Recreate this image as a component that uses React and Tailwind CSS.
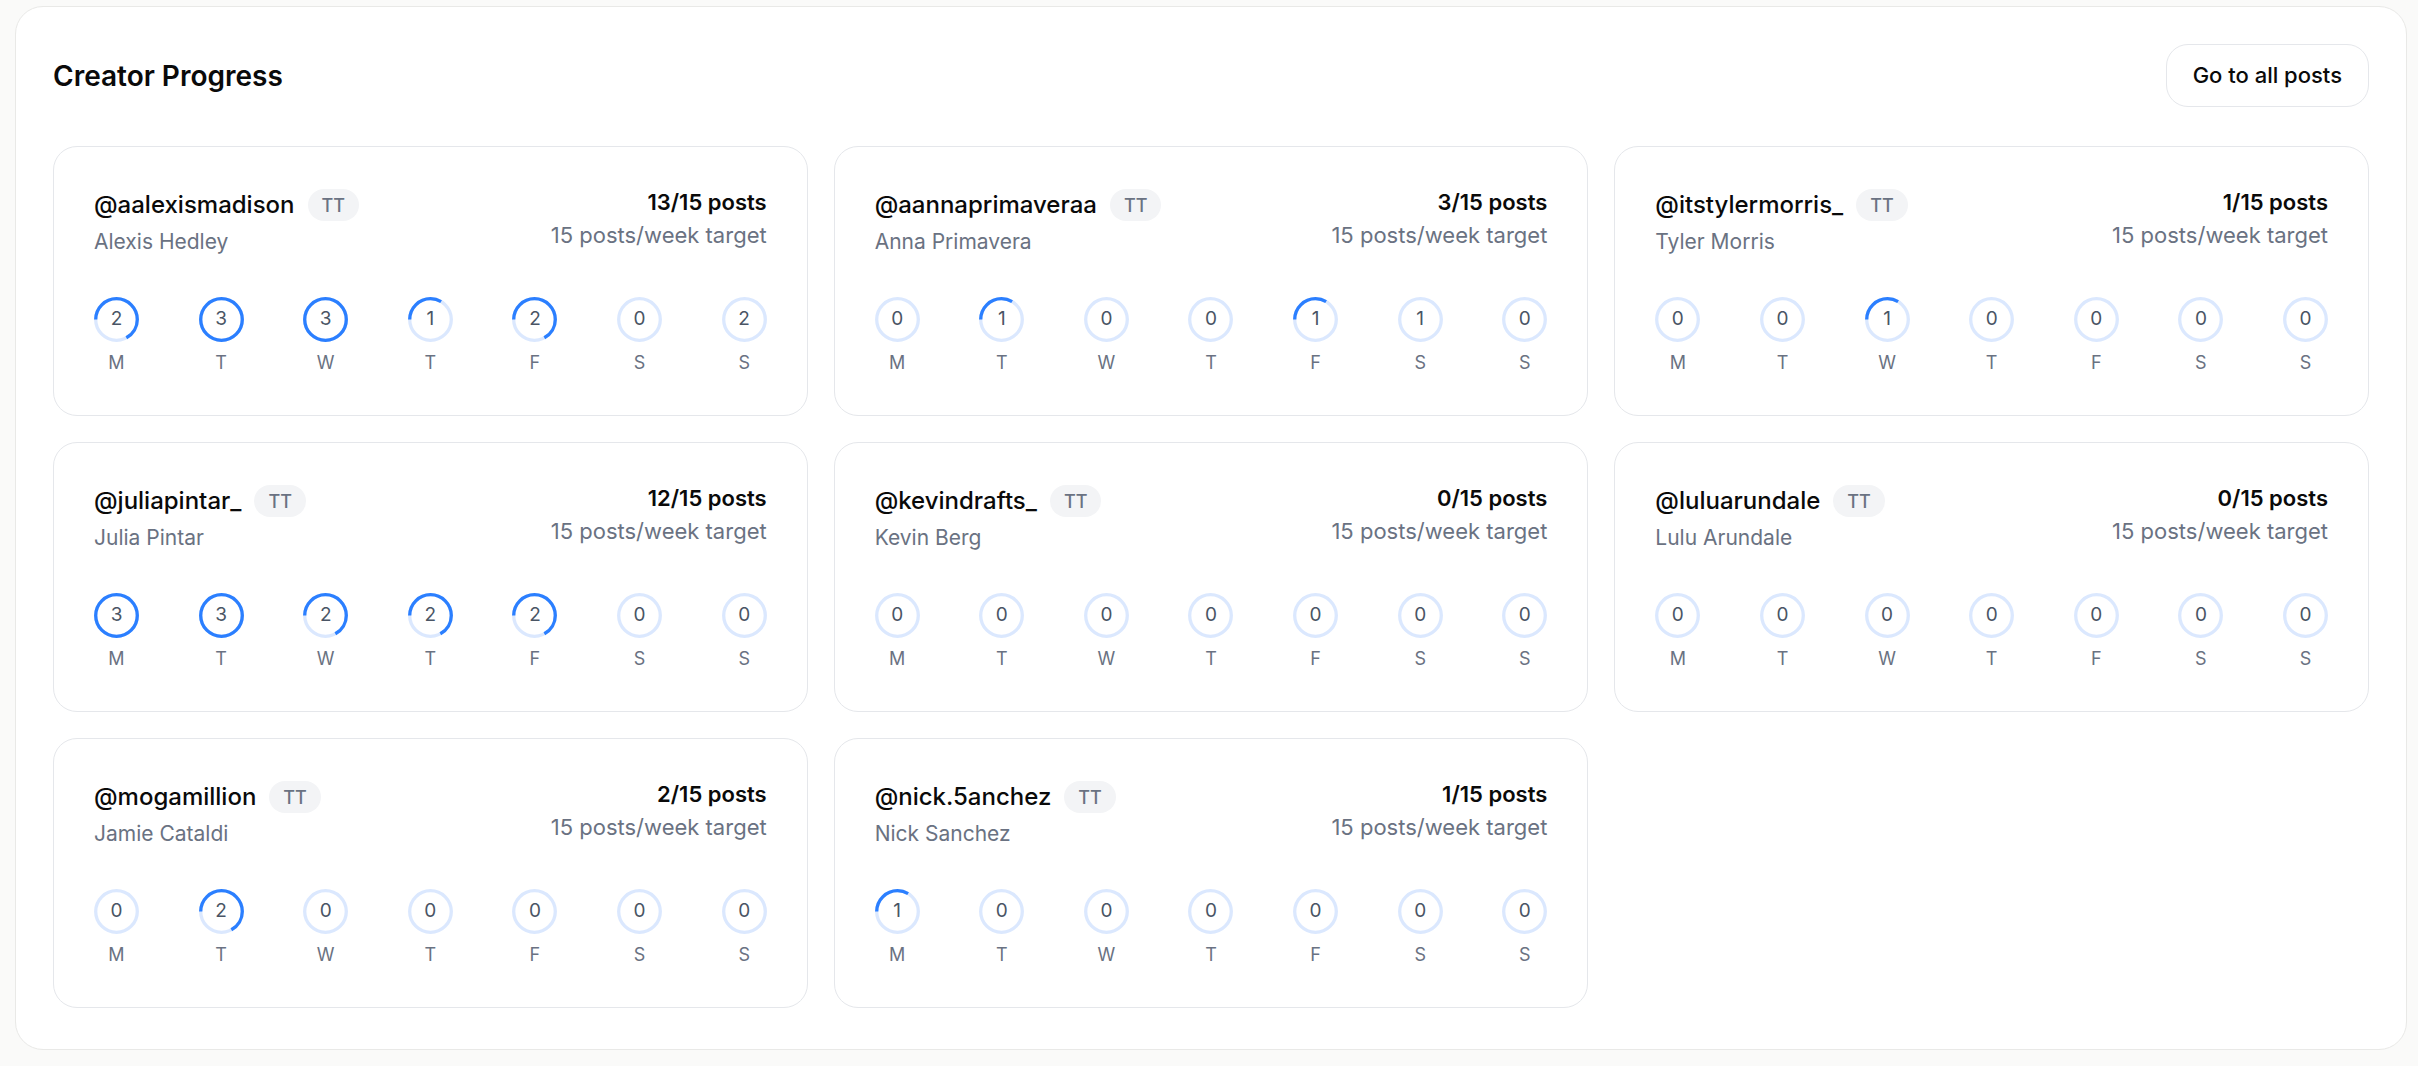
import React from 'react'

const DAYS = ['M', 'T', 'W', 'T', 'F', 'S', 'S']
const DAILY_TARGET = 3

const creators = [
  { handle: '@aalexismadison', name: 'Alexis Hedley', counts: [2, 3, 3, 1, 2, 0, 2] },
  { handle: '@aannaprimaveraa', name: 'Anna Primavera', counts: [0, 1, 0, 0, 1, 1, 0] },
  { handle: '@itstylermorris_', name: 'Tyler Morris', counts: [0, 0, 1, 0, 0, 0, 0] },
  { handle: '@juliapintar_', name: 'Julia Pintar', counts: [3, 3, 2, 2, 2, 0, 0] },
  { handle: '@kevindrafts_', name: 'Kevin Berg', counts: [0, 0, 0, 0, 0, 0, 0] },
  { handle: '@luluarundale', name: 'Lulu Arundale', counts: [0, 0, 0, 0, 0, 0, 0] },
  { handle: '@mogamillion', name: 'Jamie Cataldi', counts: [0, 2, 0, 0, 0, 0, 0] },
  { handle: '@nick.5anchez', name: 'Nick Sanchez', counts: [1, 0, 0, 0, 0, 0, 0] },
]

function DayRing({ value, weekend }) {
  const r = 20.8
  const c = 2 * Math.PI * r
  // weekends have no target, so no arc is drawn
  const frac = weekend ? 0 : Math.min(value / DAILY_TARGET, 1)

  return (
    <div className="relative w-[45px] h-[45px]">
      <svg width="45" height="45" viewBox="0 0 45 45" className="block">
        <circle cx="22.5" cy="22.5" r={r} fill="none" stroke="#dbe8fe" strokeWidth="3.3" />
        {frac > 0 && (
          <circle
            cx="22.5"
            cy="22.5"
            r={r}
            fill="none"
            stroke="#2b7fff"
            strokeWidth="3.3"
            strokeDasharray={c}
            strokeDashoffset={c * (1 - frac)}
            transform="rotate(180 22.5 22.5)"
          />
        )}
      </svg>
      <span className="absolute inset-0 flex items-center justify-center text-[19px] text-gray-600">
        {value}
      </span>
    </div>
  )
}

function CreatorCard({ creator }) {
  const total = creator.counts.reduce((a, b) => a + b, 0)

  return (
    <div className="rounded-[24px] border border-gray-200 bg-white p-[40px]">
      <div className="flex items-start justify-between">
        <div>
          <div className="flex items-center gap-[13px]">
            <span className="text-[24px] leading-[36px] font-medium text-[#0a0a0a]">{creator.handle}</span>
            <span className="flex items-center h-[32px] px-[14px] rounded-full bg-[#f3f4f6] text-[18px] font-medium text-gray-500">
              TT
            </span>
          </div>
          <div className="mt-[4px] text-[21px] leading-[30px] text-gray-500">{creator.name}</div>
        </div>
        <div className="text-right">
          <div className="text-[22px] leading-[30px] font-semibold text-[#0a0a0a]">{total}/15 posts</div>
          <div className="mt-[3px] text-[22px] leading-[30px] text-gray-500">15 posts/week target</div>
        </div>
      </div>

      <div className="mt-[40px] flex justify-between">
        {creator.counts.map((v, i) => (
          <div key={i} className="flex flex-col items-center">
            <DayRing value={v} weekend={i >= 5} />
            <span className="mt-[9px] text-[18px] leading-[24px] text-gray-500">{DAYS[i]}</span>
          </div>
        ))}
      </div>
    </div>
  )
}

export default function App() {
  return (
    <div className="min-h-screen bg-[#fafaf9] pt-[6px] pl-[15px] pr-[11px] pb-[16px] font-['Inter',sans-serif]">
      <div className="rounded-[28px] border border-[#e9e9e7] bg-white p-[37px] pb-[41px]">
        <div className="flex items-center justify-between">
          <h1 className="text-[28px] leading-[40px] font-semibold text-[#0a0a0a]">Creator Progress</h1>
          <button className="h-[63px] px-[26px] rounded-[22px] border border-gray-200 bg-white text-[22px] font-medium text-[#0a0a0a]">
            Go to all posts
          </button>
        </div>

        <div className="mt-[39px] grid grid-cols-3 gap-[26px]">
          {creators.map((c) => (
            <CreatorCard key={c.handle} creator={c} />
          ))}
        </div>
      </div>
    </div>
  )
}
